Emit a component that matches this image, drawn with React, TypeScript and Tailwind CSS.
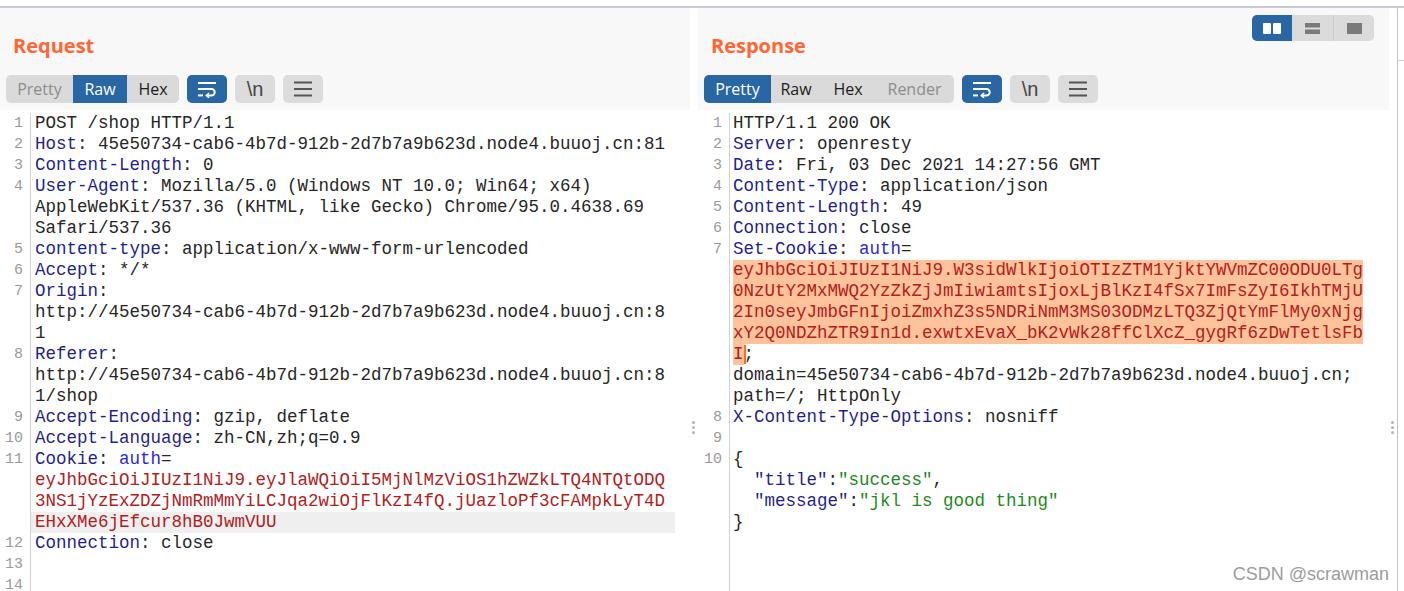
import React from 'react';

type Seg = [string, string];
type Row = { n?: number; segs: Seg[]; hl?: 'gray' | 'orange'; caret?: boolean };
type Tab = { label: string; w: string; tone: 'on' | 'off' | 'dim' };

// token colours
const K = 'text-[#1f1f8c]';
const V = 'text-[#262626]';
const A = 'text-[#2a2ad2]';
const R = 'text-[#b2201c]';
const G = 'text-[#1e8a22]';

const HOST = '45e50734-cab6-4b7d-912b-2d7b7a9b623d.node4.buuoj.cn';

const requestRows: Row[] = [
  { n: 1, segs: [['POST /shop HTTP/1.1', V]] },
  { n: 2, segs: [['Host', K], [`: ${HOST}:81`, V]] },
  { n: 3, segs: [['Content-Length', K], [': 0', V]] },
  { n: 4, segs: [['User-Agent', K], [': Mozilla/5.0 (Windows NT 10.0; Win64; x64)', V]] },
  { segs: [['AppleWebKit/537.36 (KHTML, like Gecko) Chrome/95.0.4638.69', V]] },
  { segs: [['Safari/537.36', V]] },
  { n: 5, segs: [['content-type', K], [': application/x-www-form-urlencoded', V]] },
  { n: 6, segs: [['Accept', K], [': */*', V]] },
  { n: 7, segs: [['Origin', K], [':', V]] },
  { segs: [[`http://${HOST}:8`, V]] },
  { segs: [['1', V]] },
  { n: 8, segs: [['Referer', K], [':', V]] },
  { segs: [[`http://${HOST}:8`, V]] },
  { segs: [['1/shop', V]] },
  { n: 9, segs: [['Accept-Encoding', K], [': gzip, deflate', V]] },
  { n: 10, segs: [['Accept-Language', K], [': zh-CN,zh;q=0.9', V]] },
  { n: 11, segs: [['Cookie', K], [': ', V], ['auth', A], ['=', V]] },
  { segs: [['eyJhbGciOiJIUzI1NiJ9.eyJlaWQiOiI5MjNlMzViOS1hZWZkLTQ4NTQtODQ', R]] },
  { segs: [['3NS1jYzExZDZjNmRmMmYiLCJqa2wiOjFlKzI4fQ.jUazloPf3cFAMpkLyT4D', R]] },
  { segs: [['EHxXMe6jEfcur8hB0JwmVUU', R]], hl: 'gray' },
  { n: 12, segs: [['Connection', K], [': close', V]] },
  { n: 13, segs: [] },
  { n: 14, segs: [] },
];

const responseRows: Row[] = [
  { n: 1, segs: [['HTTP/1.1 200 OK', V]] },
  { n: 2, segs: [['Server', K], [': openresty', V]] },
  { n: 3, segs: [['Date', K], [': Fri, 03 Dec 2021 14:27:56 GMT', V]] },
  { n: 4, segs: [['Content-Type', K], [': application/json', V]] },
  { n: 5, segs: [['Content-Length', K], [': 49', V]] },
  { n: 6, segs: [['Connection', K], [': close', V]] },
  { n: 7, segs: [['Set-Cookie', K], [': ', V], ['auth', A], ['=', V]] },
  { segs: [['eyJhbGciOiJIUzI1NiJ9.W3sidWlkIjoiOTIzZTM1YjktYWVmZC00ODU0LTg', R]], hl: 'orange' },
  { segs: [['0NzUtY2MxMWQ2YzZkZjJmIiwiamtsIjoxLjBlKzI4fSx7ImFsZyI6IkhTMjU', R]], hl: 'orange' },
  { segs: [['2In0seyJmbGFnIjoiZmxhZ3s5NDRiNmM3MS03ODMzLTQ3ZjQtYmFlMy0xNjg', R]], hl: 'orange' },
  { segs: [['xY2Q0NDZhZTR9In1d.exwtxEvaX_bK2vWk28ffClXcZ_gygRf6zDwTetlsFb', R]], hl: 'orange' },
  { segs: [['I', R], [';', V]], caret: true },
  { segs: [[`domain=${HOST};`, V]] },
  { segs: [['path=/; HttpOnly', V]] },
  { n: 8, segs: [['X-Content-Type-Options', K], [': nosniff', V]] },
  { n: 9, segs: [] },
  { n: 10, segs: [['{', V]] },
  { segs: [['  ', V], ['"title"', K], [':', V], ['"success"', G], [',', V]] },
  { segs: [['  ', V], ['"message"', K], [':', V], ['"jkl is good thing"', G]] },
  { segs: [['}', V]] },
];

const toneCls = {
  on: 'bg-[#2866a4] text-white',
  off: 'text-[#1c1c1c]',
  dim: 'text-[#8d8d8d]',
};

const WrapIcon = () => (
  <svg width="20" height="17" viewBox="0 0 20 17" fill="none" stroke="white" strokeWidth="2">
    <path d="M1 2h18" />
    <path d="M1 8h13.5a3.2 3.2 0 0 1 0 6.4H9.5" />
    <path d="M12 12l-2.6 2.4 2.6 2.4" strokeWidth="1.7" />
    <path d="M1 14.4h5" />
  </svg>
);

const MenuIcon = () => (
  <svg width="20" height="16" viewBox="0 0 20 16" fill="none" stroke="#555" strokeWidth="2">
    <path d="M1 1.5h18M1 8h18M1 14.5h18" />
  </svg>
);

const ViewToggle: React.FC = () => (
  <div className="mt-[7px] flex h-[26px] overflow-hidden rounded-[5px] bg-[#dbdbdb]">
    <div className="flex w-[40px] items-center justify-center bg-[#2866a4]">
      <svg width="18" height="11" viewBox="0 0 18 11">
        <rect x="0" y="0" width="8" height="11" rx="1" fill="white" />
        <rect x="10" y="0" width="8" height="11" rx="1" fill="white" />
      </svg>
    </div>
    <div className="flex w-[41px] items-center justify-center">
      <svg width="15" height="11" viewBox="0 0 15 11">
        <rect x="0" y="0" width="15" height="4.5" fill="#7a7a7a" />
        <rect x="0" y="6.5" width="15" height="4.5" fill="#7a7a7a" />
      </svg>
    </div>
    <div className="flex w-[41px] items-center justify-center border-l border-[#cacaca]">
      <svg width="15" height="11" viewBox="0 0 15 11">
        <rect x="0" y="0" width="15" height="11" fill="#7a7a7a" />
      </svg>
    </div>
  </div>
);

const Toolbar: React.FC<{ tabs: Tab[] }> = ({ tabs }) => (
  <div className="mt-[17px] flex h-[28px] gap-[8px] font-['Open_Sans',sans-serif] text-[16px]">
    <div className="flex overflow-hidden rounded-[5px] bg-[#dadada]">
      {tabs.map(t => (
        <div key={t.label} className={`${t.w} ${toneCls[t.tone]} flex items-center justify-center`}>
          {t.label}
        </div>
      ))}
    </div>
    <div className="flex w-[40px] items-center justify-center rounded-[5px] bg-[#2866a4]">
      <WrapIcon />
    </div>
    <div className="flex w-[40px] items-center justify-center rounded-[5px] bg-[#dcdcdc] font-['Liberation_Sans',sans-serif] text-[20px] text-[#444]">
      \n
    </div>
    <div className="flex w-[40px] items-center justify-center rounded-[5px] bg-[#dcdcdc]">
      <MenuIcon />
    </div>
  </div>
);

const CodeRow: React.FC<{ row: Row }> = ({ row }) => {
  const text = row.segs.map(([t, c], i) => (
    <span key={i} className={c}>{t}</span>
  ));
  if (row.caret) {
    const [first, ...rest] = row.segs;
    return (
      <div className="h-[21px]">
        <span className={`inline-block h-[21px] bg-[#ffc39b] ${first[1]}`}>{first[0]}</span>
        <span className="inline-block h-[19px] w-[2px] -mr-[2px] bg-[#ff6d1f] align-middle" />
        {rest.map(([t, c], i) => (
          <span key={i} className={c}>{t}</span>
        ))}
      </div>
    );
  }
  if (row.hl === 'orange') {
    return (
      <div className="h-[21px]">
        <span className="inline-block h-[21px] bg-[#ffc39b]">{text}</span>
      </div>
    );
  }
  return <div className="h-[21px]">{text}</div>;
};

const Grip = () => (
  <div className="mt-[308px] flex flex-col items-center gap-[2px]">
    <div className="h-[3px] w-[3px] rounded-full bg-[#b4b4b4]" />
    <div className="h-[3px] w-[3px] rounded-full bg-[#b4b4b4]" />
    <div className="h-[3px] w-[3px] rounded-full bg-[#b4b4b4]" />
  </div>
);

const Panel: React.FC<{
  title: string;
  tabs: Tab[];
  rows: Row[];
  width: string;
  gutter: string;
  textPad: string;
  contentW: string;
  gripCol: string;
  toggle?: boolean;
}> = ({ title, tabs, rows, width, gutter, textPad, contentW, gripCol, toggle }) => (
  <div className={`${width} flex shrink-0 flex-col`}>
    <div className="mr-[8px] h-[102px] shrink-0 bg-[#f8f8f8] pl-[6px] pr-[15px]">
      <div className="flex items-start justify-between">
        <div className="mt-[26px] h-[24px] pl-[7px] font-['Open_Sans',sans-serif] text-[20px] font-bold leading-[24px] text-[#ff6633]">
          {title}
        </div>
        {toggle && <ViewToggle />}
      </div>
      <Toolbar tabs={tabs} />
    </div>
    <div className="flex flex-1 pt-[3px] font-['Liberation_Mono','Courier_New',monospace] text-[17.5px] leading-[21px] whitespace-pre">
      <div className={`${gutter} shrink-0 border-r border-[#d2d2d2] pr-[7px] text-right text-[15px] text-[#9a9a9a]`}>
        {rows.map((r, i) => (
          <div key={i} className="h-[21px]">{r.n ?? ''}</div>
        ))}
      </div>
      <div className={`${contentW} shrink-0`}>
        {rows.map((r, i) => (
          <div key={i} className={`${textPad} ${r.hl === 'gray' ? 'bg-[#efefef]' : ''}`}>
            <CodeRow row={r} />
          </div>
        ))}
      </div>
      <div className={`${gripCol} flex justify-end pr-[3px]`}>
        <Grip />
      </div>
    </div>
  </div>
);

const App: React.FC = () => {
  return (
    <div className="relative h-[591px] w-[1404px] overflow-hidden bg-white">
      <div className="h-[6px]" />
      <div className="h-[2px] bg-[#c8c8d2]" />
      <div className="flex h-[583px]">
        <Panel
          title="Request"
          width="w-[698px]"
          gutter="w-[31px]"
          textPad="pl-[4px]"
          contentW="w-[644px]"
          gripCol="w-[23px]"
          rows={requestRows}
          tabs={[
            { label: 'Pretty', w: 'w-[67px]', tone: 'dim' },
            { label: 'Raw', w: 'w-[54px]', tone: 'on' },
            { label: 'Hex', w: 'w-[52px]', tone: 'off' },
          ]}
        />
        <Panel
          title="Response"
          width="w-[699px]"
          gutter="w-[32px]"
          textPad="pl-[3px]"
          contentW="w-[655px]"
          gripCol="w-[12px]"
          rows={responseRows}
          toggle
          tabs={[
            { label: 'Pretty', w: 'w-[67px]', tone: 'on' },
            { label: 'Raw', w: 'w-[50px]', tone: 'off' },
            { label: 'Hex', w: 'w-[54px]', tone: 'off' },
            { label: 'Render', w: 'w-[79px]', tone: 'dim' },
          ]}
        />
        <div className="w-px bg-[#c4c4c4]" />
        <div className="flex-1">
          <div className="mt-[52px] h-px bg-[#d0d0d0]" />
        </div>
      </div>
      <div className="absolute bottom-[6px] right-[15px] font-['Liberation_Sans',Arial,sans-serif] text-[18px] leading-[22px] text-[#9c9c9c]">
        CSDN @scrawman
      </div>
    </div>
  );
};

export default App;
